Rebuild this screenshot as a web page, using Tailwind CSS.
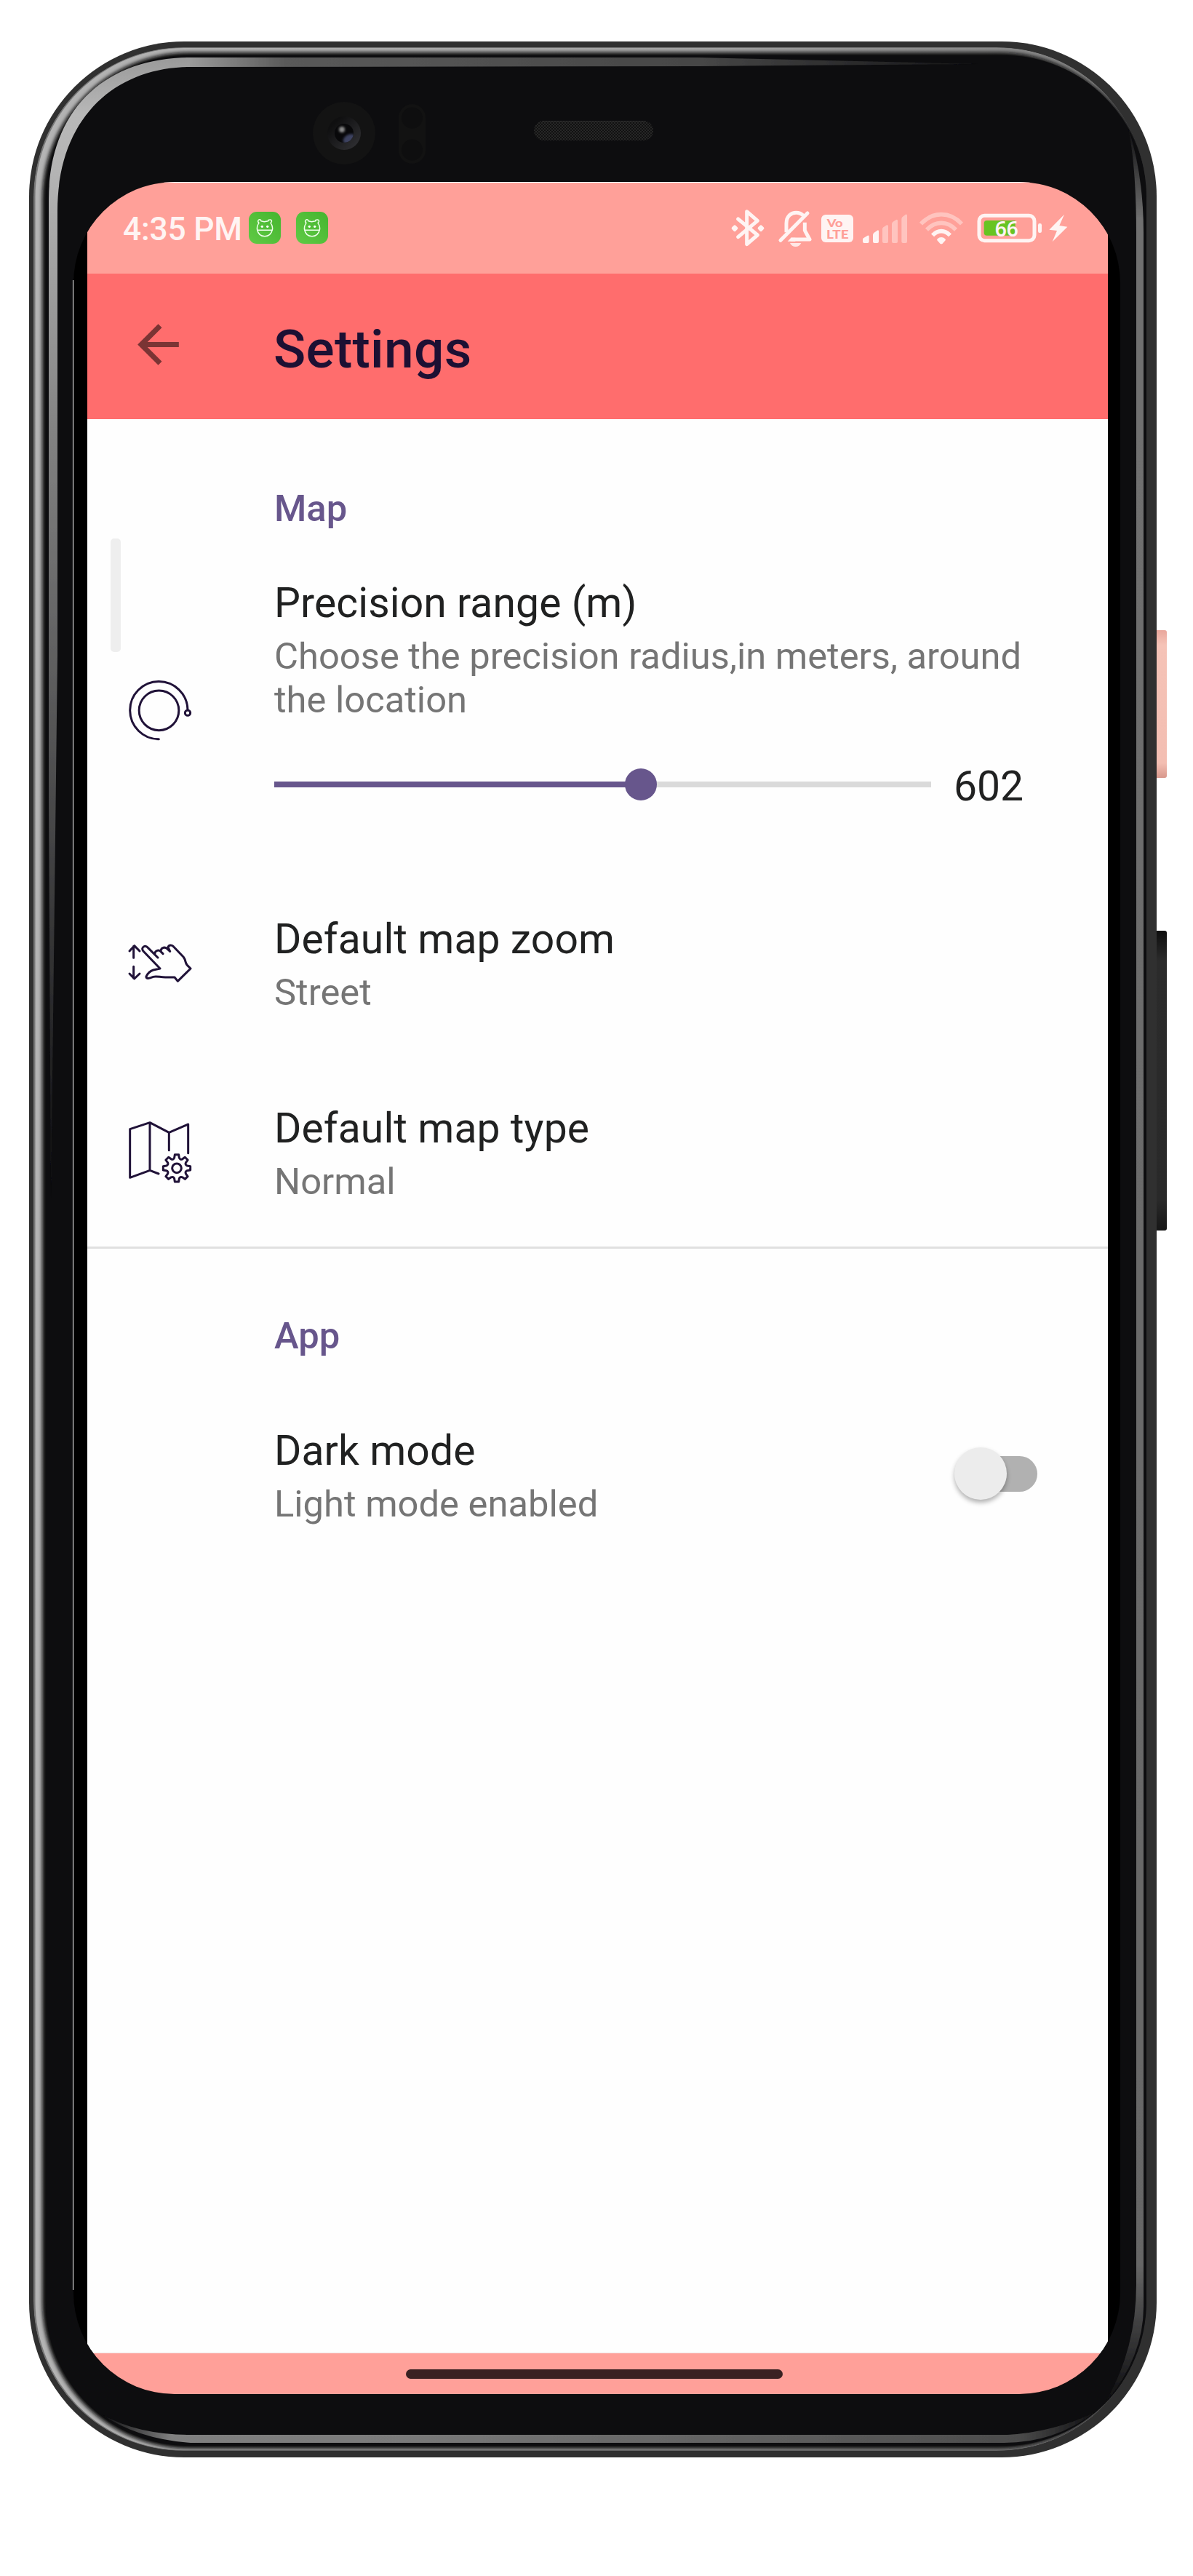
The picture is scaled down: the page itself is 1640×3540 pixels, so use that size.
<!DOCTYPE html>
<html lang="en">
<head>
<meta charset="utf-8">
<title>Settings</title>
<script src="https://cdn.jsdelivr.net/npm/@tailwindcss/browser@4"></script>
</head>
<body class="bg-white font-['Roboto',sans-serif]">
<div class="relative w-[1640px] h-[3540px] overflow-hidden bg-white pl-[101px] pt-[250px]">

  <!-- Device body -->
  <svg class="absolute inset-0" width="1640" height="3540" viewBox="0 0 1640 3540">
    <defs>
      <linearGradient id="rim" x1="0" x2="1" y1="0" y2="0"><stop offset="0" stop-color="#b4b4b4"/><stop offset=".6" stop-color="#a4a4a4"/><stop offset=".95" stop-color="#808080"/><stop offset="1" stop-color="#141416"/></linearGradient>
      <linearGradient id="bandL" gradientUnits="userSpaceOnUse" x1="0" y1="79" x2="0" y2="1650"><stop offset="0" stop-color="#9a9a9a"/><stop offset=".05" stop-color="#b8b8b8"/><stop offset=".1" stop-color="#b4b4b4"/><stop offset=".33" stop-color="#828282"/><stop offset="1" stop-color="#0d0d0f"/></linearGradient>
      <linearGradient id="bandT" gradientUnits="userSpaceOnUse" x1="261" y1="0" x2="1347" y2="0"><stop offset="0" stop-color="#9a9a9a"/><stop offset=".12" stop-color="#5a5a5a"/><stop offset=".65" stop-color="#464646"/><stop offset="1" stop-color="#141416"/></linearGradient>
      <linearGradient id="bandB" gradientUnits="userSpaceOnUse" x1="140" y1="0" x2="1510" y2="0"><stop offset="0" stop-color="#0d0d0f"/><stop offset=".07" stop-color="#808080"/><stop offset=".3" stop-color="#7a7a7a"/><stop offset=".92" stop-color="#4c4c4c"/><stop offset="1" stop-color="#0d0d0f"/></linearGradient>
      <linearGradient id="bandR" gradientUnits="userSpaceOnUse" x1="0" y1="176" x2="0" y2="3300"><stop offset="0" stop-color="#0d0d0f"/><stop offset=".04" stop-color="#707070"/><stop offset=".94" stop-color="#666"/><stop offset="1" stop-color="#0d0d0f"/></linearGradient>
      <linearGradient id="pink" x1="0" x2="0" y1="0" y2="1"><stop offset="0" stop-color="#e9a79c"/><stop offset=".1" stop-color="#f5c3b7"/><stop offset=".9" stop-color="#f3beb2"/><stop offset="1" stop-color="#d8988c"/></linearGradient>
      <linearGradient id="key" x1="0" x2="0" y1="0" y2="1"><stop offset="0" stop-color="#0e0e0e"/><stop offset=".1" stop-color="#2b2b2b"/><stop offset=".9" stop-color="#292929"/><stop offset="1" stop-color="#161616"/></linearGradient>
      <linearGradient id="ring" x1="0" x2="1" y1="0" y2="1"><stop offset=".2" stop-color="#0f0f10"/><stop offset="1" stop-color="#343437"/></linearGradient>
      <pattern id="mesh" width="4" height="4" patternUnits="userSpaceOnUse"><rect width="4" height="4" fill="#111"/><rect width="2" height="2" fill="#272727"/><rect x="2" y="2" width="2" height="2" fill="#272727"/></pattern>
      <filter id="soft" x="-5%" y="-5%" width="110%" height="110%"><feGaussianBlur stdDeviation="2.6"/></filter>
      <filter id="soft1" x="-5%" y="-5%" width="110%" height="110%"><feGaussianBlur stdDeviation=".7"/></filter>
      <filter id="glow" x="-100%" y="-100%" width="300%" height="300%"><feGaussianBlur stdDeviation="1.6"/></filter>
      <clipPath id="inner"><rect x="46" y="65" width="1530" height="3303" rx="206"/></clipPath>
      <clipPath id="lens"><circle cx="473" cy="183" r="13"/></clipPath>
    </defs>
    <path d="M1590 866h11q3 0 3 3v197q0 3-3 3h-11z" fill="url(#pink)"/>
    <path d="M1590 1279h11q3 0 3 3v406q0 3-3 3h-11z" fill="url(#key)"/>
    <rect x="40" y="57" width="1550" height="3320" rx="213" fill="#303030"/>
    <g clip-path="url(#inner)">
      <rect x="46" y="65" width="1530" height="3303" rx="206" fill="#777"/>
      <rect x="48.500" y="66" width="1530" height="3301" rx="204" fill="url(#rim)"/>
      <rect x="58" y="72" width="1518" height="3293" rx="202" fill="#0d0d0f" filter="url(#soft)"/>
      <rect x="63" y="76" width="1513" height="3285" rx="196" fill="#0d0d0f"/>
      <rect x="1400" y="300" width="190" height="2800" fill="#0d0d0f"/>
    </g>
    <g filter="url(#soft1)">
      <path d="M67 1100V275C67 150 145 79 262 79V92C160 92 79 160 79 290V900L70 1650z" fill="url(#bandL)"/>
      <path d="M261 79H960L1347 88L960 91L261 92z" fill="url(#bandT)"/>
      <path d="M1551 176Q1572 240 1572 320V3170Q1572 3240 1518 3304Q1562 3230 1562 3140V320Q1562 230 1551 176z" fill="url(#bandR)"/>
      <path d="M140 3318Q190 3346 262 3346H1385Q1450 3342 1505 3315Q1450 3357 1380 3357H262Q190 3352 140 3318z" fill="url(#bandB)"/>
    </g>
    <circle cx="473" cy="183" r="43" fill="#131313"/>
    <circle cx="473" cy="183" r="23" fill="url(#ring)"/>
    <circle cx="473" cy="183" r="13" fill="#08080a"/>
    <g clip-path="url(#lens)"><ellipse cx="480" cy="191" rx="9" ry="6" transform="rotate(-30 480 191)" fill="#3c4260" filter="url(#glow)"/></g>
    <circle cx="470" cy="178" r="4" fill="#8a8a8a" filter="url(#glow)"/>
    <rect x="548" y="143" width="37" height="82" rx="18.500" fill="#121212"/>
    <circle cx="566.500" cy="162" r="14.500" fill="#0e0e0f"/><circle cx="566.500" cy="206" r="14.500" fill="#0e0e0f"/>
    <rect x="734" y="166" width="164" height="27" rx="13.500" fill="url(#mesh)"/>
    <rect x="745" y="166" width="142" height="1" fill="#2b2b2b"/>
    <rect x="100" y="385" width="1" height="2762" fill="#fff"/>
  </svg>

  <!-- Screen -->
  <div class="relative flex h-[3040px] w-[1439px] flex-col overflow-hidden rounded-[139px] bg-black pl-[19px] pr-[17px]">
    <div class="flex h-[126px] shrink-0 items-start border-t border-white bg-[#ffa099] pl-[49px]">
      <div class="mt-[37px] flex h-[54px] w-[173px] items-center text-[44.3px] font-medium leading-[54px] text-[#fff4f3] whitespace-nowrap tracking-[-0.2px]"><span>4:35 PM</span></div>
      <div class="mt-[40px] flex gap-[21px]">
        <svg class="h-11 w-11" viewBox="0 0 132 132"><defs><linearGradient id="g" x1="1" y1="0" x2="0" y2="1"><stop offset="0" stop-color="#45b52f"/><stop offset="1" stop-color="#60ca45"/></linearGradient></defs><rect width="132" height="132" rx="33" fill="url(#g)"/><g fill="none" stroke="#efffeb" stroke-width="4.500" stroke-linejoin="round"><path d="M42 46C34 40 39 30 48 33Q51 36 51 38L64 41L80 38Q80 33 86 33C95 31 98 41 90 46C97 56 99 66 97 75C92 94 80 101 66 101C51 101 39 93 35 75C33 64 36 54 42 46zM35 76H97"/></g><circle cx="55" cy="61" r="5" fill="#fff"/><circle cx="77" cy="61" r="5" fill="#fff"/></svg>
        <svg class="h-11 w-11" viewBox="0 0 132 132"><rect width="132" height="132" rx="33" fill="url(#g)"/><g fill="none" stroke="#efffeb" stroke-width="4.500" stroke-linejoin="round"><path d="M42 46C34 40 39 30 48 33Q51 36 51 38L64 41L80 38Q80 33 86 33C95 31 98 41 90 46C97 56 99 66 97 75C92 94 80 101 66 101C51 101 39 93 35 75C33 64 36 54 42 46zM35 76H97"/></g><circle cx="55" cy="61" r="5" fill="#fff"/><circle cx="77" cy="61" r="5" fill="#fff"/></svg>
      </div>
      <div class="ml-auto mr-[53px] mt-[29px] flex h-[70px]">
        <!-- bluetooth -->
        <svg class="h-[70px] w-[58px]" viewBox="69 30 174 210"><path d="M104 93L184 159L140 197V62L184 100L104 167" fill="none" stroke="#fff4f3" stroke-width="15" stroke-linecap="round" stroke-linejoin="round"/><g fill="#fff4f3"><rect x="79" y="120" width="22" height="22" rx="6" transform="rotate(45 90 131)"/><rect x="187" y="120" width="22" height="22" rx="6" transform="rotate(45 198 131)"/></g></svg>
        <!-- muted bell -->
        <svg class="h-[70px] w-[62px]" viewBox="243 30 186 210"><g fill="none" stroke="#fff4f3" stroke-width="15"><path d="M303 148V112C303 78 325 67 343 67Q362 67 374 80"/><path d="M279 181L390 69" stroke-linecap="round"/><path d="M379 107V140L399 177H322" stroke-linejoin="round"/></g><path d="M308 185L322 170H340V185z" fill="#fff4f3"/><path d="M318 192H364Q357 207 341 207Q325 207 318 192z" fill="#fff4f3" fill-opacity=".85"/></svg>
        <!-- VoLTE badge -->
        <svg class="h-[70px] w-[57px]" viewBox="429 30 171 210"><rect x="447" y="75" width="132" height="114" rx="18" fill="#fff4f3"/><g fill="#ffa099" font-family="Lato,sans-serif" font-weight="900"><text x="470" y="126" font-size="46" textLength="66" lengthAdjust="spacingAndGlyphs">Vo</text><text x="468" y="174" font-size="50" textLength="92" lengthAdjust="spacingAndGlyphs">LTE</text></g></svg>
        <!-- signal -->
        <svg class="h-[70px] w-[76px]" viewBox="600 30 228 210"><g fill="#fff4f3"><path d="M618 177Q618 173 622 171L638 161Q644 159 644 165V186Q644 192 638 192H624Q618 192 618 186z"/><path d="M660 158Q660 153 664 150L678 140Q684 137 684 144V186Q684 192 678 192H666Q660 192 660 186z"/></g><g fill="#ffc4bf"><path d="M699 134Q699 129 703 127L717 118Q723 116 723 122V186Q723 192 717 192H705Q699 192 699 186z"/><path d="M738 114Q738 108 742 105L756 96Q762 94 762 100V186Q762 192 756 192H744Q738 192 738 186z"/><path d="M778 92Q778 87 782 84L795 74Q801 72 801 79V186Q801 192 795 192H784Q778 192 778 186z"/></g></svg>
        <!-- wifi -->
        <svg class="h-[70px] w-[78px]" viewBox="828 30 234 210"><g fill="none" stroke-width="17"><path d="M858 113Q895 74 942 74Q989 74 1026 113" stroke="#ffc4bf"/><path d="M882 137Q909 109 942 109Q975 109 1002 137" stroke="#ffc4bf"/><path d="M906 160Q922 143 942 143Q962 143 978 160" stroke="#fff4f3"/></g><path d="M925 181Q923 178 926 175Q933 168 942 168Q951 168 958 175Q961 178 959 181L947 194Q942 198 937 194z" fill="#fff4f3"/></svg>
        <!-- battery -->
        <svg class="h-[70px] w-[103px]" viewBox="1062 30 309 210"><rect x="1098" y="79" width="228" height="103" rx="22" fill="none" stroke="#fff4f3" stroke-width="15"/><path d="M1130 99H1247V161H1130Q1118 161 1118 149V111Q1118 99 1130 99z" fill="#68c422"/><rect x="1341" y="111" width="15" height="39" rx="7" fill="#fff4f3"/><text x="1163" y="164" font-family="'Noto Sans',sans-serif" font-weight="600" font-size="87" textLength="97" lengthAdjust="spacingAndGlyphs" fill="#fff4f3">66</text></svg>
        <!-- charging -->
        <svg class="h-[70px] w-[33px]" viewBox="1371 30 99 210"><path d="M1449 74L1387 137L1419 141L1400 187L1462 125L1429 120z" fill="#fff4f3"/></svg>
      </div>
    </div>

    <header class="flex h-[200px] shrink-0 items-start bg-[#ff6d6d] pl-[55px]">
      <svg class="mt-[55px] h-[85px] w-[85px]" viewBox="0 0 24 24"><path d="M20 11H7.830l5.590-5.590L12 4l-8 8 8 8 1.410-1.410L7.830 13H20v-2z" fill="#7a3434"/></svg>
      <h1 class="ml-[116px] mt-[61px] text-[73px] font-medium leading-[86px] tracking-[0.3px] text-[#1d1033]">Settings</h1>
    </header>

    <main class="relative flex grow flex-col bg-[#fefefe]">
      <div class="absolute left-[32px] top-[164px] h-[156px] w-[14px] rounded-[5px] bg-[#eeeeee]"></div>

      <h2 class="ml-[257px] mt-[93px] text-[50.7px] font-medium leading-[60px] text-[#67568c]">Map</h2>

      <div class="mt-[63px] flex h-[401px] items-start pl-[55px]">
        <svg class="mt-[141px] h-[86px] w-[90px] shrink-0" viewBox="105 98 270 258" fill="none" stroke="#201238" stroke-width="9" stroke-linecap="round"><circle cx="235.500" cy="228" r="82"/><path d="M235 346.500A119 119 0 1 1 354 226"/><circle cx="354" cy="238" r="11"/></svg>
        <div class="ml-[112px] w-[1060px]">
          <p class="text-[57px] leading-[74px] tracking-[0.1px] text-[#202121]">Precision range (m)</p>
          <p class="mt-1.5 text-[50.7px] leading-[60px] text-[#757575]">Choose the precision radius,in meters, around the location</p>
          <div class="mt-[49px] flex h-[74px] items-center">
            <div class="relative h-2 w-[903px] bg-[#dadada]">
              <div class="h-2 bg-[#67568c]" style="width:55.8%"></div>
              <div class="absolute -top-[18px] h-11 w-11 -translate-x-1/2 rounded-full bg-[#67568c]" style="left:55.8%"></div>
            </div>
            <span class="ml-[31px] mt-1.5 text-[57px] leading-[74px] text-[#202121]">602</span>
          </div>
        </div>
      </div>

      <div class="flex h-[260px] items-center pl-[55px]">
        <svg class="h-[55px] w-[90px]" viewBox="105 105 270 165" fill="none" stroke="#201238" stroke-width="9" stroke-linecap="round" stroke-linejoin="round"><path d="M131 166V118M114 138L134 116L156 138M131 202V250M114 231L134 252L156 231"/><path d="M231 165L190 124C178 110 160 124 170 137L240 210L212 216C196 221 190 228 183 243C182 254 195 251 212 244C225 240 240 246 262 246H300L313 262L366 210L352 196C342 185 348 178 337 163L296 120C290 112 276 112 273 122L281 139M219 153C216 137 232 132 240 137L252 149M243 137C246 120 262 122 268 127L281 139"/></svg>
        <div class="ml-[112px] pt-0.5"><p class="text-[57px] leading-[74px] tracking-[0.1px] text-[#202121]">Default map zoom</p><p class="mt-1.5 text-[50.7px] leading-[60px] text-[#757575]">Street</p></div>
      </div>

      <div class="flex h-[260px] items-center pl-[55px]">
        <svg class="h-[88px] w-[90px]" viewBox="105 835 270 264" fill="none" stroke="#201238" stroke-width="9" stroke-linecap="round" stroke-linejoin="round"><path d="M198 846L116 873V1073L198 1043V846L277 887L356 853V972M277 887V960M198 1043L234 1057"/><g transform="translate(309 1034)"><circle r="19"/><path d="M-10-43L-8-56H8L10-43Q13.800-33.300 23.300-37.500L33.900-45.200L45.200-33.900L37.500-23.300Q33.300-13.800 43-10L56-8V8L43 10Q33.300 13.800 37.500 23.300L45.200 33.900L33.900 45.200L23.300 37.500Q13.800 33.300 10 43L8 56H-8L-10 43Q-13.800 33.300-23.300 37.500L-33.900 45.200L-45.200 33.900L-37.500 23.300Q-33.300 13.800-43 10L-56 8V-8L-43-10Q-33.300-13.800-37.500-23.300L-45.200-33.900L-33.900-45.200L-23.300-37.500Q-13.800-33.300-10-43z"/></g></svg>
        <div class="ml-[112px] pt-0.5"><p class="text-[57px] leading-[74px] tracking-[0.1px] text-[#202121]">Default map type</p><p class="mt-1.5 text-[50.7px] leading-[60px] text-[#757575]">Normal</p></div>
      </div>

      <div class="h-[3px] bg-[#e0e0e0]"></div>
      <h2 class="ml-[257px] mt-[90px] text-[50.7px] font-medium leading-[60px] text-[#67568c]">App</h2>

      <div class="mt-[29px] flex h-[260px] items-center justify-between pl-[257px] pr-[97px]">
        <div class="pt-[3px]"><p class="text-[57px] leading-[74px] tracking-[0.1px] text-[#202121]">Dark mode</p><p class="mt-1.5 text-[50.7px] leading-[60px] text-[#757575]">Light mode enabled</p></div>
        <div class="relative h-[49px] w-[98px] rounded-full bg-[#b1b1b1]"><div class="absolute -left-[16px] -top-[12px] h-[72px] w-[72px] rounded-full bg-[#ececec] shadow-[0_4px_6px_rgba(0,0,0,0.3)]"></div></div>
      </div>
    </main>

    <div class="flex h-[57px] shrink-0 justify-center border-t border-[#f0e0df] bg-[#ffa099]">
      <div class="mt-[22px] h-[13px] w-[518px] -translate-x-[5px] rounded-full bg-[#3a2122]"></div>
    </div>
  </div>
</div>
</body>
</html>
